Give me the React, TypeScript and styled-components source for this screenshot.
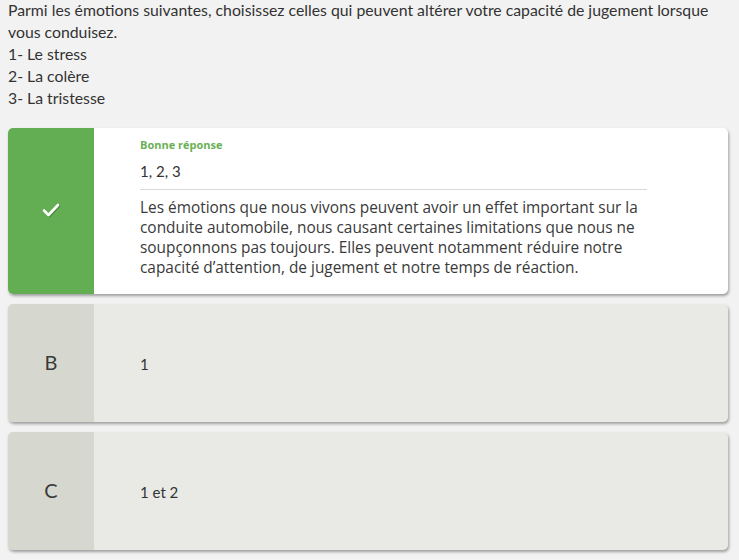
import React from 'react';
import styled, { createGlobalStyle } from 'styled-components';

const GlobalStyle = createGlobalStyle`
  body {
    margin: 0;
    background: #f2f2f2;
    font-family: Lato, "Open Sans", sans-serif;
    color: #333;
  }
`;

const Page = styled.div`
  padding: 0 11px 10px 8px;
`;

const Question = styled.div`
  font-size: 15.8px;
  line-height: 22px;
  color: #333;
  margin-top: -1px;
  margin-bottom: 19px;
`;

const Answers = styled.div`
  display: flex;
  flex-direction: column;
  gap: 10px;
`;

const Card = styled.div<{ $correct?: boolean }>`
  display: flex;
  width: 720px;
  min-height: ${p => (p.$correct ? '166px' : '118px')};
  border-radius: 5px;
  overflow: hidden;
  background: ${p => (p.$correct ? '#ffffff' : '#e9eae6')};
  box-shadow: 1px 2px 3px rgba(0, 0, 0, 0.35);
`;

const Side = styled.div<{ $correct?: boolean }>`
  flex: 0 0 86px;
  display: flex;
  align-items: center;
  justify-content: center;
  background: ${p => (p.$correct ? '#63ad53' : '#d6d8cf')};
  color: #3a3a3a;
  font-size: 20px;
  padding-bottom: 3px;
`;

const Body = styled.div<{ $center?: boolean }>`
  flex: 1;
  padding: ${p => (p.$center ? '0 81px 0 46px' : '9px 81px 14px 46px')};
  display: flex;
  flex-direction: column;
  justify-content: ${p => (p.$center ? 'center' : 'flex-start')};
`;

const Label = styled.div`
  font-family: "Open Sans", sans-serif;
  font-weight: 700;
  font-size: 11px;
  color: #6aaf55;
  line-height: 16px;
`;

const Chosen = styled.div`
  font-size: 15px;
  line-height: 20px;
  color: #333;
  margin-top: 8px;
  padding-bottom: 8px;
  border-bottom: 1px solid #d9d9d9;
`;

const Explanation = styled.p`
  margin: 8px 0 0;
  font-family: "Open Sans", sans-serif;
  font-size: 15.4px;
  line-height: 20px;
  color: #3a3a3a;
`;

const OptionText = styled.div`
  font-size: 15px;
  color: #333;
  padding-top: 1px;
`;

const Check = () => (
  <svg width="18" height="16" viewBox="0 0 18 16" style={{ filter: 'drop-shadow(1px 1px 0 rgba(0,0,0,0.2))' }}>
    <path d="M2 8.5 L6.5 13 L16 3" fill="none" stroke="#fff" strokeWidth="2.6" strokeLinecap="round" strokeLinejoin="round" />
  </svg>
);

const options = [
  { letter: 'B', text: '1' },
  { letter: 'C', text: '1 et 2' },
];

export default function App() {
  return (
    <>
      <GlobalStyle />
      <Page>
        <Question>
          Parmi les émotions suivantes, choisissez celles qui peuvent altérer votre capacité de jugement lorsque vous conduisez.
          <br />1- Le stress
          <br />2- La colère
          <br />3- La tristesse
        </Question>
        <Answers>
          <Card $correct>
            <Side $correct>
              <Check />
            </Side>
            <Body>
              <Label>Bonne réponse</Label>
              <Chosen>1, 2, 3</Chosen>
              <Explanation>
                Les émotions que nous vivons peuvent avoir un effet important sur la conduite automobile, nous causant certaines limitations que nous ne soupçonnons pas toujours. Elles peuvent notamment réduire notre capacité d’attention, de jugement et notre temps de réaction.
              </Explanation>
            </Body>
          </Card>
          {options.map(o => (
            <Card key={o.letter}>
              <Side>{o.letter}</Side>
              <Body $center>
                <OptionText>{o.text}</OptionText>
              </Body>
            </Card>
          ))}
        </Answers>
      </Page>
    </>
  );
}
